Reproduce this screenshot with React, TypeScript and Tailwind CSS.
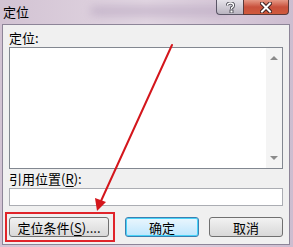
import React from "react";

const font = { fontFamily: '"Noto Sans CJK SC", "Liberation Sans", sans-serif' };

function Underlined({ ch }: { ch: string }) {
  return <span className="underline underline-offset-2">{ch}</span>;
}

export default function App() {
  return (
    <div
      className="relative w-[293px] h-[247px] overflow-hidden bg-gradient-to-r from-[#d2c3d3] via-[#e2d6e2] to-[#cdbdd0] text-black"
      style={font}
    >
      {/* blurred background behind the glass title bar */}
      <div className="absolute left-[90px] top-[6px] h-[10px] w-[140px] rounded-full bg-[#b8a6c0] opacity-60 blur-[4px]" />

      {/* title bar */}
      <div className="relative flex h-[24px] items-start justify-between">
        <div className="pl-[3px] pt-[4px] text-[13px] leading-[16px] text-black">定位</div>
        <div className="mr-[4px] flex">
          <div className="flex h-[15px] w-[27px] items-center justify-center rounded-bl-[4px] border border-t-0 border-r-0 border-[#5a5566] bg-gradient-to-b from-[#e6e3ea] to-[#b9b4c0]">
            <svg width="9" height="11" viewBox="0 0 9 11">
              <path d="M1.5 3.5 Q1.5 1 4.5 1 Q7.5 1 7.5 3.5 Q7.5 5 5.5 5.8 L5.5 7" fill="none" stroke="#3a3a44" strokeWidth="3" />
              <path d="M1.5 3.5 Q1.5 1 4.5 1 Q7.5 1 7.5 3.5 Q7.5 5 5.5 5.8 L5.5 7" fill="none" stroke="#fff" strokeWidth="1.4" />
              <rect x="4" y="8" width="3" height="3" fill="#fff" stroke="#3a3a44" strokeWidth="0.8" />
            </svg>
          </div>
          <div className="flex h-[15px] w-[46px] items-center justify-center rounded-br-[4px] border border-t-0 border-[#5a3a3a] bg-gradient-to-b from-[#e59886] via-[#c8503c] to-[#d05a3c]">
            <svg width="12" height="11" viewBox="0 0 12 11">
              <path d="M2 1.5 L10 9.5 M10 1.5 L2 9.5" stroke="#3b2020" strokeWidth="4" strokeLinecap="square" />
              <path d="M2 1.5 L10 9.5 M10 1.5 L2 9.5" stroke="#fff" strokeWidth="2" strokeLinecap="square" />
            </svg>
          </div>
        </div>
      </div>

      {/* client area */}
      <div className="relative ml-[2px] mr-[3px] flex h-[221px] flex-col border border-[#8d8598] bg-[#f0f0f0] pl-[6px] pr-[6px]">
        <div className="mt-[4px] h-[18px] text-[13px] leading-[18px]">定位:</div>
        <div className="flex h-[122px] border border-[#828790] bg-white">
          <div className="flex-1" />
          <div className="flex w-[16px] flex-col items-center justify-between bg-[#f4f4f4] py-[8px]">
            <div className="h-0 w-0 border-x-[4px] border-b-[4px] border-x-transparent border-b-[#8b8b8b]" />
            <div className="h-0 w-0 border-x-[4px] border-t-[4px] border-x-transparent border-t-[#8b8b8b]" />
          </div>
        </div>
        <div className="mt-[1px] h-[18px] text-[13px] leading-[18px]">
          引用位置(<Underlined ch="R" />):
        </div>
        <div className="h-[18px] border border-[#abadb3] bg-white" />
        <div className="mt-[11px] flex text-[13px]">
          <div className="flex h-[20px] w-[100px] items-center justify-center rounded-[3px] border border-[#707070] bg-gradient-to-b from-[#f2f2f2] to-[#d8d8d8] leading-none">
            定位条件(<Underlined ch="S" />)....
          </div>
          <div className="ml-[16px] flex h-[20px] w-[74px] items-center justify-center rounded-[3px] border border-[#3c7fb1] bg-gradient-to-b from-[#eaf6fd] to-[#bee6fd] leading-none shadow-[inset_0_0_0_1px_#48d3f8]">
            确定
          </div>
          <div className="ml-[10px] flex h-[20px] w-[74px] items-center justify-center rounded-[3px] border border-[#707070] bg-gradient-to-b from-[#f2f2f2] to-[#d8d8d8] leading-none">
            取消
          </div>
        </div>
      </div>

      {/* annotation: red box + arrow */}
      <div className="absolute left-[5px] top-[212px] h-[30px] w-[110px] border-2 border-[#e0242a]" />
      <svg className="absolute left-0 top-0" width="293" height="247" viewBox="0 0 293 247">
        <line x1="172" y1="45" x2="101" y2="201" stroke="#d4161c" strokeWidth="2" strokeLinecap="round" />
        <polygon points="97,211 95,198 106,202" fill="#d4161c" />
      </svg>
    </div>
  );
}
